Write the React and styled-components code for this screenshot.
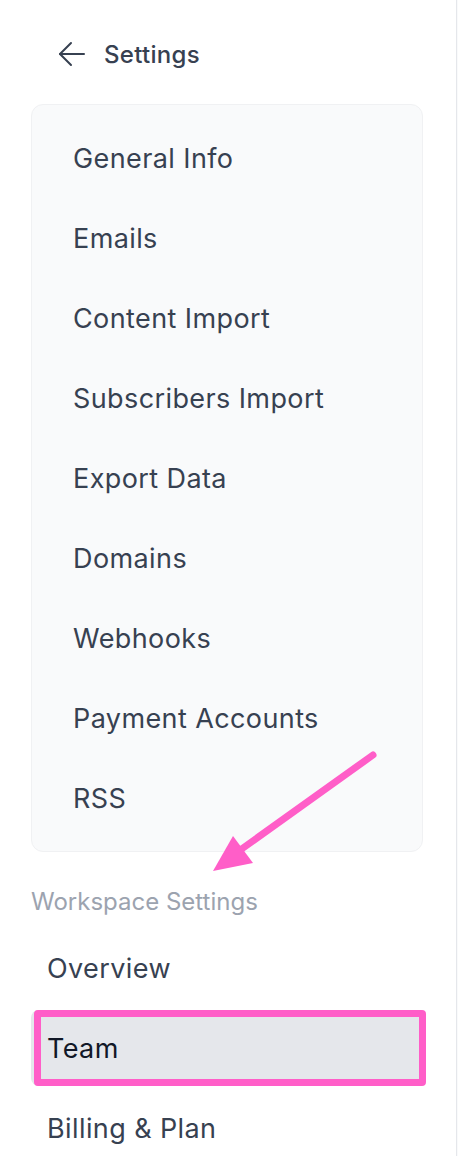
import React from 'react';
import styled, { createGlobalStyle } from 'styled-components';

const GlobalStyle = createGlobalStyle`
    html, body {
        margin: 0;
        padding: 0;
        background: #f9fafb;
        font-family: Inter, "Noto Sans", sans-serif;
        -webkit-font-smoothing: antialiased;
    }
`;

const generalItems = [
    'General Info',
    'Emails',
    'Content Import',
    'Subscribers Import',
    'Export Data',
    'Domains',
    'Webhooks',
    'Payment Accounts',
    'RSS',
];

const workspaceItems = ['Overview', 'Team', 'Billing & Plan'];

const BackArrow = () => (
    <svg width="27" height="26" viewBox="0 0 27 26" fill="none" stroke="currentColor" strokeWidth="2" strokeLinecap="round" strokeLinejoin="round">
        <path d="M26 13H2" />
        <path d="M13 2L2 13l11 11" />
    </svg>
);

const App = () => {
    return (
        <>
            <GlobalStyle />
            <Sidebar>
                <Header>
                    <BackArrow />
                    <span>Settings</span>
                </Header>
                <Card>
                    {generalItems.map((item) => (
                        <CardItem key={item}>{item}</CardItem>
                    ))}
                </Card>
                <SectionLabel>Workspace Settings</SectionLabel>
                <Nav>
                    {workspaceItems.map((item) => (
                        <NavItem key={item} $active={item === 'Team'}>
                            {item}
                            {item === 'Team' && <Highlight />}
                        </NavItem>
                    ))}
                </Nav>
                <Pointer viewBox="0 0 458 1156">
                    <line x1="373" y1="755" x2="236" y2="853" stroke="#ff5ec8" strokeWidth="7" strokeLinecap="round" />
                    <polygon points="213,871 233,836 253,863" fill="#ff5ec8" />
                </Pointer>
            </Sidebar>
        </>
    );
};

const Sidebar = styled.aside`
    position: relative;
    width: 425px;
    height: 1156px;
    padding: 0 0 0 31px;
    background: #ffffff;
    border-right: 1px solid #e5e7eb;
    overflow: hidden;
`;

const Header = styled.div`
    display: flex;
    align-items: center;
    gap: 19px;
    height: 30px;
    margin: 39px 0 35px 27px;
    color: #374151;
    font-size: 24px;
    font-weight: 500;
    letter-spacing: 0.3px;

    svg {
        color: #374151;
    }
`;

const Card = styled.div`
    width: 390px;
    padding: 13px 0;
    background: #f9fafb;
    border: 1px solid #f0f1f3;
    border-radius: 12px;
`;

const CardItem = styled.div`
    display: flex;
    align-items: center;
    height: 80px;
    padding-left: 41px;
    color: #374151;
    font-size: 27px;
    font-weight: 400;
    letter-spacing: 0.4px;
`;

const SectionLabel = styled.div`
    margin-top: 36px;
    height: 28px;
    line-height: 28px;
    color: #9ca3af;
    font-size: 24px;
`;

const Nav = styled.div`
    display: flex;
    flex-direction: column;
    gap: 4px;
    margin-top: 14px;
`;

const NavItem = styled.div`
    position: relative;
    display: flex;
    align-items: center;
    height: 76px;
    width: 392px;
    padding-left: 16px;
    box-sizing: border-box;
    border-radius: 8px;
    background: ${(p) => (p.$active ? '#e5e7eb' : 'transparent')};
    color: ${(p) => (p.$active ? '#111827' : '#374151')};
    font-size: 27px;
    font-weight: 400;
    letter-spacing: 0.4px;
`;

const Highlight = styled.span`
    position: absolute;
    left: 3px;
    top: 0;
    width: 392px;
    height: 76px;
    box-sizing: border-box;
    border: 7px solid #ff5ec8;
    border-radius: 4px;
`;

const Pointer = styled.svg`
    position: absolute;
    left: 0;
    top: 0;
    width: 458px;
    height: 1156px;
    pointer-events: none;
`;

export default App;
